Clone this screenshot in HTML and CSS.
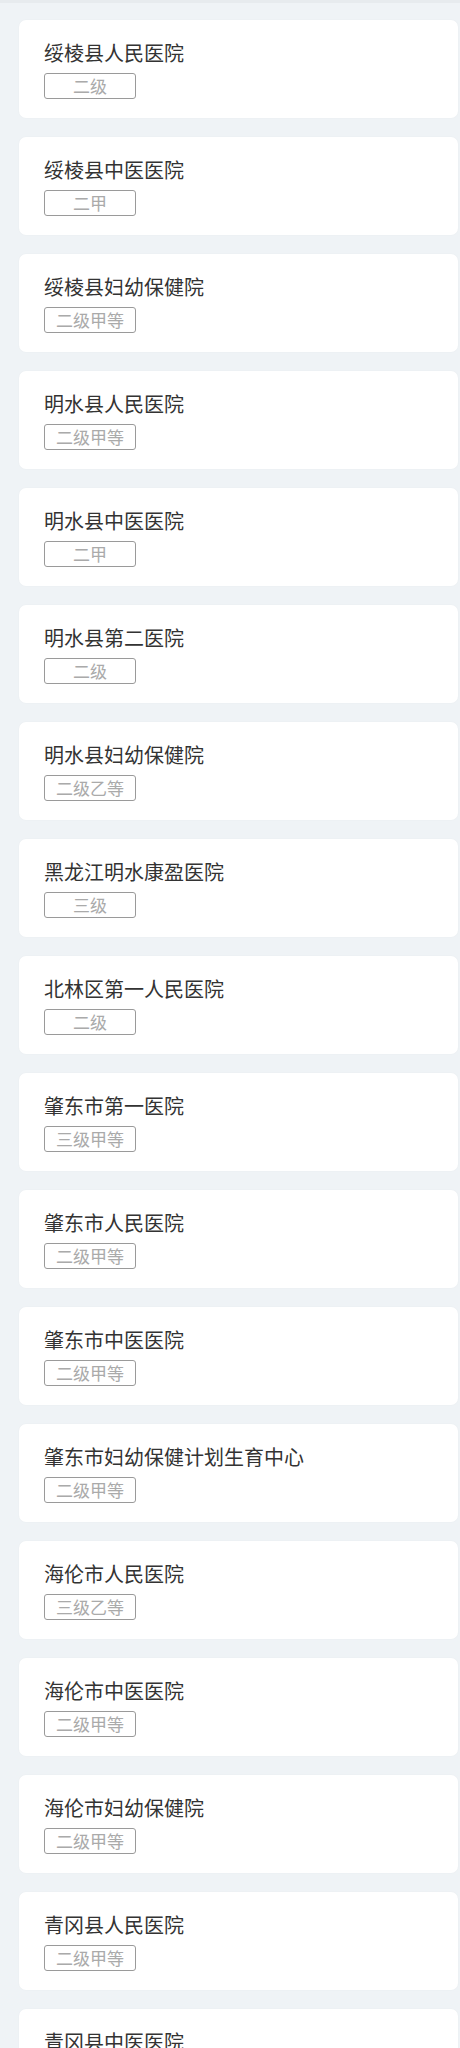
FILE: index.html
```html
<!DOCTYPE html>
<html lang="zh">
<head>
<meta charset="utf-8">
<title>医院列表</title>
<link rel="stylesheet" href="styles.css">
</head>
<body>
<div class="topbar"></div>
<div class="list">
  <div class="card"><div class="name">绥棱县人民医院</div><div class="tag">二级</div></div>
  <div class="card"><div class="name">绥棱县中医医院</div><div class="tag">二甲</div></div>
  <div class="card"><div class="name">绥棱县妇幼保健院</div><div class="tag">二级甲等</div></div>
  <div class="card"><div class="name">明水县人民医院</div><div class="tag">二级甲等</div></div>
  <div class="card"><div class="name">明水县中医医院</div><div class="tag">二甲</div></div>
  <div class="card"><div class="name">明水县第二医院</div><div class="tag">二级</div></div>
  <div class="card"><div class="name">明水县妇幼保健院</div><div class="tag">二级乙等</div></div>
  <div class="card"><div class="name">黑龙江明水康盈医院</div><div class="tag">三级</div></div>
  <div class="card"><div class="name">北林区第一人民医院</div><div class="tag">二级</div></div>
  <div class="card"><div class="name">肇东市第一医院</div><div class="tag">三级甲等</div></div>
  <div class="card"><div class="name">肇东市人民医院</div><div class="tag">二级甲等</div></div>
  <div class="card"><div class="name">肇东市中医医院</div><div class="tag">二级甲等</div></div>
  <div class="card"><div class="name">肇东市妇幼保健计划生育中心</div><div class="tag">二级甲等</div></div>
  <div class="card"><div class="name">海伦市人民医院</div><div class="tag">三级乙等</div></div>
  <div class="card"><div class="name">海伦市中医医院</div><div class="tag">二级甲等</div></div>
  <div class="card"><div class="name">海伦市妇幼保健院</div><div class="tag">二级甲等</div></div>
  <div class="card"><div class="name">青冈县人民医院</div><div class="tag">二级甲等</div></div>
  <div class="card"><div class="name">青冈县中医医院</div><div class="tag">二级甲等</div></div>
</div>
</body>
</html>
```

FILE: styles.css
```css
html, body {
  margin: 0;
  padding: 0;
  background: #eff3f6;
  font-family: "Noto Sans CJK SC", "Noto Sans", sans-serif;
}
.topbar {
  height: 3px;
  background: #e7ebee;
}
.list {
  display: flex;
  flex-direction: column;
  gap: 19px;
  padding: 17px 2px 20px 19px;
}
.card {
  background: #ffffff;
  border-radius: 7px;
  box-shadow: 0 0 2px rgba(0, 0, 0, 0.04);
  padding: 18px 25px 19px;
  height: 98px;
  box-sizing: border-box;
}
.name {
  font-size: 20px;
  line-height: 30px;
  color: #333333;
}
.tag {
  margin-top: 5px;
  width: 92px;
  height: 26px;
  box-sizing: border-box;
  border: 1px solid #9a9a9a;
  border-radius: 3px;
  font-size: 17px;
  line-height: 24px;
  color: #aaaaaa;
  text-align: center;
}
```
